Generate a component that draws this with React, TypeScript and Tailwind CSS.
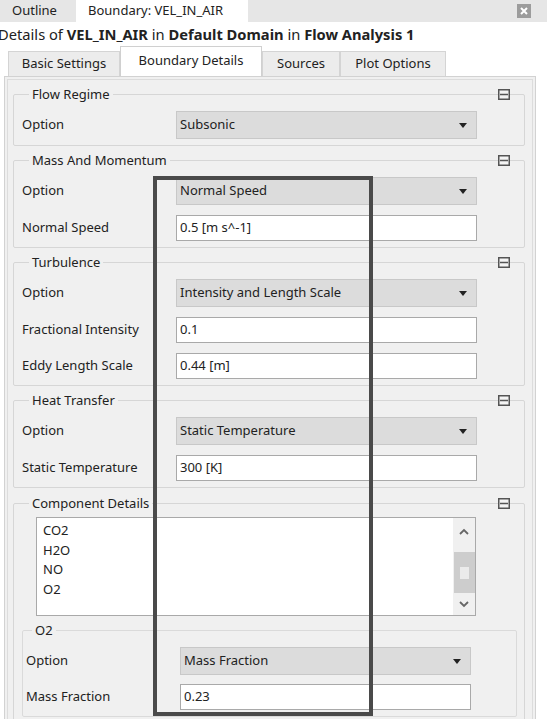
import { ReactNode } from "react";

const CollapseIcon = () => (
  <svg width="12" height="11" viewBox="0 0 12 11" className="absolute right-[14px] top-[-13px]">
    <rect x="0.75" y="0.75" width="10.5" height="9.5" fill="#f4f4f4" stroke="#555" strokeWidth="1.5" />
    <line x1="2" y1="5.5" x2="10" y2="5.5" stroke="#555" strokeWidth="1.5" />
  </svg>
);

const Group = ({ title, children, className = "" }: { title: string; children: ReactNode; className?: string }) => (
  <fieldset className={`relative border border-[#d6d6d6] rounded-[2px] pl-[8px] pr-[47px] pb-[6px] ${className}`}>
    <legend className="ml-[7px] px-[3px] leading-[16px]">{title}</legend>
    <CollapseIcon />
    {children}
  </fieldset>
);

const Dropdown = ({ value }: { value: string }) => (
  <div className="flex-1 h-[28px] bg-[#dcdcdc] border border-[#c8c8c8] flex items-center justify-between pl-[3px] pr-[9px]">
    <span>{value}</span>
    <svg width="8" height="5" viewBox="0 0 8 5">
      <path d="M0 0 H8 L4 5 Z" fill="#222" />
    </svg>
  </div>
);

const TextField = ({ value }: { value: string }) => (
  <div className="flex-1 h-[26px] bg-white border border-[#a9a9a9] flex items-center pl-[3px]">{value}</div>
);

const Row = ({ label, children }: { label: string; children: ReactNode }) => (
  <div className="flex items-center">
    <div className="w-[154px] shrink-0">{label}</div>
    {children}
  </div>
);

const tabs = [
  { name: "Basic Settings", w: "w-[112px]" },
  { name: "Boundary Details", w: "w-[142px]", active: true },
  { name: "Sources", w: "w-[78px]" },
  { name: "Plot Options", w: "w-[106px]" },
];

export default function App() {
  return (
    <div className="relative w-[547px] h-[719px] overflow-hidden bg-white text-[13px] text-[#222] font-['Noto_Sans',sans-serif]">
      {/* outer tab bar */}
      <div className="h-[22px] bg-[#e6e6e6] flex items-stretch">
        <div className="w-[76px] pl-[12px] flex items-center">Outline</div>
        <div className="w-[172px] bg-white pl-[12px] flex items-center">Boundary: VEL_IN_AIR</div>
        <div className="flex-1" />
        <div className="w-[14px] h-[14px] mt-[4px] mr-[16px] bg-[#9c9c9c] flex items-center justify-center">
          <svg width="8" height="8" viewBox="0 0 8 8">
            <path d="M1 1 L7 7 M7 1 L1 7" stroke="#fff" strokeWidth="2" />
          </svg>
        </div>
      </div>

      <div className="h-[24px] flex items-center ml-[-2px] text-[14.7px]">
        <span>
          Details of <b>VEL_IN_AIR</b> in <b>Default Domain</b> in <b>Flow Analysis 1</b>
        </span>
      </div>

      {/* inner tabs */}
      <div className="h-[30px] flex items-end pl-[8px]">
        {tabs.map((t) =>
          t.active ? (
            <div key={t.name} className={`${t.w} h-[30px] bg-white border border-b-0 border-[#d0d0d0] flex items-center justify-center pb-[2px]`}>
              {t.name}
            </div>
          ) : (
            <div key={t.name} className={`${t.w} h-[25px] bg-[#ececec] border border-b-0 border-[#d4d4d4] flex items-center justify-center`}>
              {t.name}
            </div>
          )
        )}
      </div>

      {/* panel */}
      <div className="ml-[4px] w-[532px] h-[650px] border border-[#d2d2d2] bg-[#f0f0f0] p-[2px]">
        <div className="h-full border border-[#dcdcdc] pl-[5px] pr-[7px] pt-[6px]">
          <Group title="Flow Regime">
            <div className="pt-[9px]">
              <Row label="Option">
                <Dropdown value="Subsonic" />
              </Row>
            </div>
          </Group>

          <Group title="Mass And Momentum" className="mt-[6px]">
            <div className="pt-[9px] flex flex-col gap-[10px]">
              <Row label="Option">
                <Dropdown value="Normal Speed" />
              </Row>
              <Row label="Normal Speed">
                <TextField value="0.5 [m s^-1]" />
              </Row>
            </div>
          </Group>

          <Group title="Turbulence" className="mt-[6px]">
            <div className="pt-[9px] flex flex-col gap-[10px]">
              <Row label="Option">
                <Dropdown value="Intensity and Length Scale" />
              </Row>
              <Row label="Fractional Intensity">
                <TextField value="0.1" />
              </Row>
              <Row label="Eddy Length Scale">
                <TextField value="0.44 [m]" />
              </Row>
            </div>
          </Group>

          <Group title="Heat Transfer" className="mt-[6px]">
            <div className="pt-[9px] flex flex-col gap-[10px]">
              <Row label="Option">
                <Dropdown value="Static Temperature" />
              </Row>
              <Row label="Static Temperature">
                <TextField value="300 [K]" />
              </Row>
            </div>
          </Group>

          <fieldset className="relative mt-[7px] border border-[#d6d6d6] rounded-[2px] pl-[8px] pr-[7px] pb-[7px]">
            <legend className="ml-[7px] px-[3px] leading-[16px]">Component Details</legend>
            <CollapseIcon />
            <div className="pt-[6px]">
              <div className="ml-[14px] w-[440px] h-[99px] bg-white border border-[#a9a9a9] flex">
                <div className="flex-1 pl-[6px] pt-[3px] leading-[19.5px]">
                  <div>CO2</div>
                  <div>H2O</div>
                  <div>NO</div>
                  <div>O2</div>
                </div>
                <div className="w-[22px] bg-[#f0f0f0] flex flex-col items-center">
                  <svg width="10" height="7" viewBox="0 0 10 7" className="mt-[10px]">
                    <path d="M1 6 L5 2 L9 6" fill="none" stroke="#666" strokeWidth="1.8" />
                  </svg>
                  <div className="mt-[17px] w-[21px] h-[41px] bg-[#cdcdcd] flex items-center justify-center">
                    <div className="w-[9px] h-[12px] bg-[#ebebeb]" />
                  </div>
                  <svg width="10" height="7" viewBox="0 0 10 7" className="mt-[8px]">
                    <path d="M1 1 L5 5 L9 1" fill="none" stroke="#666" strokeWidth="1.8" />
                  </svg>
                </div>
              </div>

              <fieldset className="mt-[6px] border border-[#dadada] rounded-[2px] pl-[3px] pr-[45px] pb-[6px]">
                <legend className="ml-[6px] px-[3px] leading-[16px]">O2</legend>
                <div className="pt-[9px] flex flex-col gap-[9px]">
                  <Row label="Option">
                    <Dropdown value="Mass Fraction" />
                  </Row>
                  <Row label="Mass Fraction">
                    <TextField value="0.23" />
                  </Row>
                </div>
              </fieldset>
            </div>
          </fieldset>
        </div>
      </div>

      {/* annotation rectangle */}
      <div className="absolute left-[153px] top-[176px] w-[220px] h-[540px] border-4 border-[#4a4a4a]" />
    </div>
  );
}
